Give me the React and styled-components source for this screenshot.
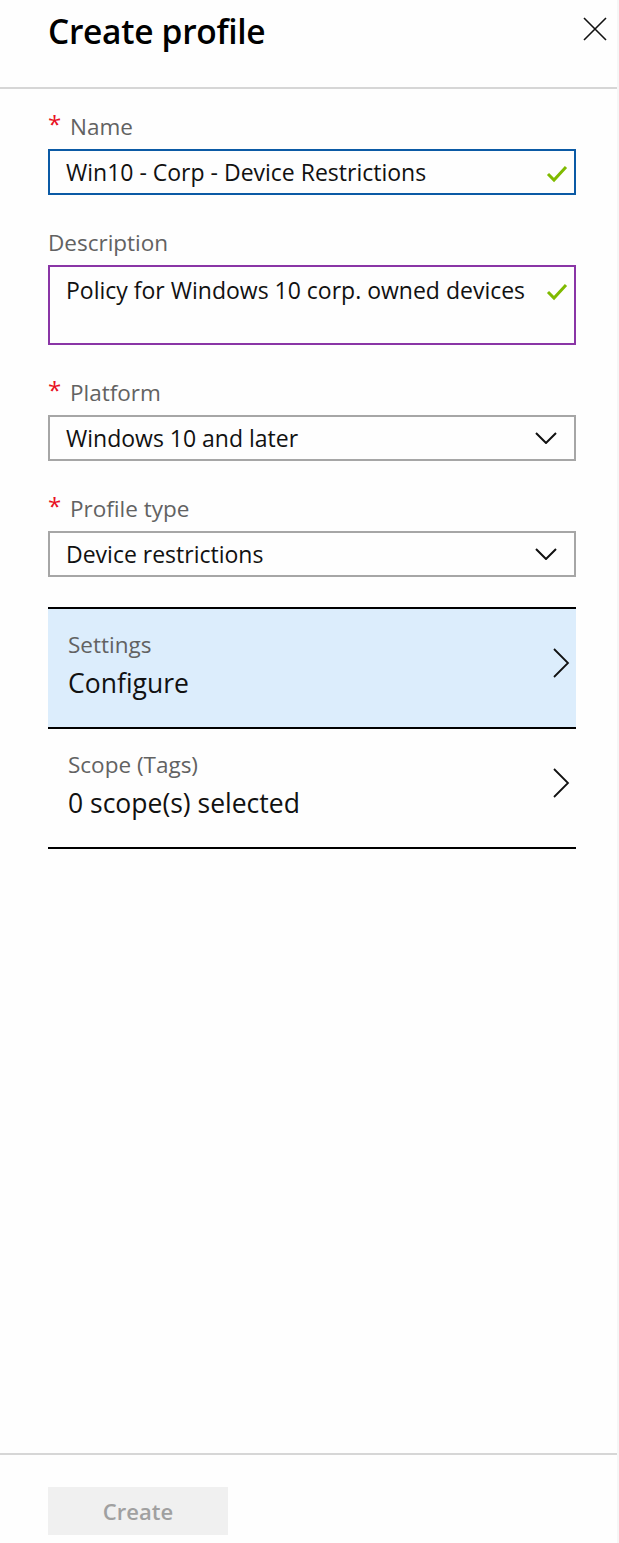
import React from 'react';
import styled, { createGlobalStyle } from 'styled-components';

const GlobalStyle = createGlobalStyle`
  *, *::before, *::after {
    box-sizing: border-box;
  }
  html, body {
    margin: 0;
    padding: 0;
    background: #fefefe;
  }
  body {
    font-family: "Segoe UI", "Open Sans", "Noto Sans", sans-serif;
    color: #000;
  }
`;

const Panel = styled.div`
  width: 619px;
  height: 1543px;
  border-right: 2px solid #f6f6f6;
  background: #fefefe;
  display: flex;
  flex-direction: column;
`;

const Header = styled.header`
  height: 89px;
  border-bottom: 2px solid #d6d6d6;
  display: flex;
  justify-content: space-between;
  align-items: flex-start;
  padding: 10px 10px 0 48px;
`;

const Title = styled.h1`
  margin: 0;
  font-size: 33.5px;
  line-height: 42px;
  font-weight: 600;
  letter-spacing: -0.3px;
`;

const CloseButton = styled.button`
  border: none;
  background: none;
  padding: 0;
  margin-top: 7px;
  width: 24px;
  height: 24px;
  display: flex;
  cursor: pointer;
`;

const Body = styled.div`
  flex: 1;
  padding: 25px 41px 0 48px;
  display: flex;
  flex-direction: column;
`;

const Field = styled.div`
  display: flex;
  flex-direction: column;
  gap: 9px;
  margin-bottom: 35px;
`;

const Label = styled.label`
  font-size: 22.5px;
  line-height: 26px;
  color: #626262;
  display: flex;
  align-items: center;
`;

const Required = styled.span`
  color: #e81123;
  font-size: 24px;
  width: 22px;
  position: relative;
  top: -3px;
`;

const Box = styled.div`
  border: 2px solid ${(p) => p.$border};
  height: ${(p) => p.$height}px;
  padding: ${(p) => (p.$multi ? '8px' : '0')} 6px 0 16px;
  display: flex;
  align-items: ${(p) => (p.$multi ? 'flex-start' : 'center')};
  justify-content: space-between;
  font-size: 23px;
  line-height: 30px;
  color: #111;
`;

const IconSlot = styled.span`
  display: flex;
  margin-right: ${(p) => p.$inset || 0}px;
  margin-top: ${(p) => p.$drop || 0}px;
`;

const Nav = styled.div`
  border-top: 2px solid #000;
  margin-top: -5px;
`;

const NavRow = styled.div`
  height: 120px;
  border-bottom: 2px solid #000;
  background: ${(p) => (p.$active ? '#dcedfc' : 'transparent')};
  padding: 23px 6px 0 20px;
  display: flex;
  justify-content: space-between;
`;

const NavText = styled.div`
  display: flex;
  flex-direction: column;
  gap: 9px;
`;

const NavLabel = styled.span`
  font-size: 22.5px;
  line-height: 26px;
  color: #626262;
`;

const NavValue = styled.span`
  font-size: 26.5px;
  line-height: 32px;
  color: #111;
`;

const Chevron = styled.div`
  margin-top: 16px;
`;

const Footer = styled.footer`
  height: 90px;
  border-top: 2px solid #d6d6d6;
  padding: 32px 0 0 48px;
`;

const CreateButton = styled.button`
  width: 180px;
  height: 48px;
  border: none;
  background: #f0f0f0;
  color: #a0a0a0;
  font-family: inherit;
  font-size: 22px;
  font-weight: 600;
  padding: 0;
`;

const CloseIcon = () => (
  <svg width="24" height="24" viewBox="0 0 24 24">
    <path d="M1 1 L23 23 M23 1 L1 23" stroke="#111" strokeWidth="1.6" fill="none" />
  </svg>
);

const Check = () => (
  <svg width="22" height="20" viewBox="0 0 22 20">
    <path d="M2 10 L8 16 L20 3" stroke="#7fba00" strokeWidth="3" fill="none" />
  </svg>
);

const ChevronDown = () => (
  <svg width="22" height="12" viewBox="0 0 22 12">
    <path d="M1 1 L11 11 L21 1" stroke="#111" strokeWidth="2" fill="none" />
  </svg>
);

const ChevronRight = () => (
  <svg width="18" height="30" viewBox="0 0 18 30">
    <path d="M2 1 L16 15 L2 29" stroke="#111" strokeWidth="1.8" fill="none" />
  </svg>
);

const fields = [
  { label: 'Name', required: true, value: 'Win10 - Corp - Device Restrictions', border: '#0b5aa5', height: 46, icon: <IconSlot $drop={3}><Check /></IconSlot> },
  { label: 'Description', value: 'Policy for Windows 10 corp. owned devices', border: '#8a35a6', height: 80, multi: true, icon: <IconSlot $drop={7}><Check /></IconSlot> },
  { label: 'Platform', required: true, value: 'Windows 10 and later', border: '#a6a6a6', height: 46, icon: <IconSlot $inset={11}><ChevronDown /></IconSlot> },
  { label: 'Profile type', required: true, value: 'Device restrictions', border: '#a6a6a6', height: 46, icon: <IconSlot $inset={11}><ChevronDown /></IconSlot> },
];

const navItems = [
  { label: 'Settings', value: 'Configure', active: true },
  { label: 'Scope (Tags)', value: '0 scope(s) selected' },
];

const App = () => (
  <>
    <GlobalStyle />
    <Panel>
      <Header>
        <Title>Create profile</Title>
        <CloseButton aria-label="Close">
          <CloseIcon />
        </CloseButton>
      </Header>
      <Body>
        {fields.map((f) => (
          <Field key={f.label}>
            <Label>
              {f.required && <Required>*</Required>}
              {f.label}
            </Label>
            <Box $border={f.border} $height={f.height} $multi={f.multi}>
              <span>{f.value}</span>
              {f.icon}
            </Box>
          </Field>
        ))}
        <Nav>
          {navItems.map((n) => (
            <NavRow key={n.label} $active={n.active}>
              <NavText>
                <NavLabel>{n.label}</NavLabel>
                <NavValue>{n.value}</NavValue>
              </NavText>
              <Chevron>
                <ChevronRight />
              </Chevron>
            </NavRow>
          ))}
        </Nav>
      </Body>
      <Footer>
        <CreateButton disabled>Create</CreateButton>
      </Footer>
    </Panel>
  </>
);

export default App;
